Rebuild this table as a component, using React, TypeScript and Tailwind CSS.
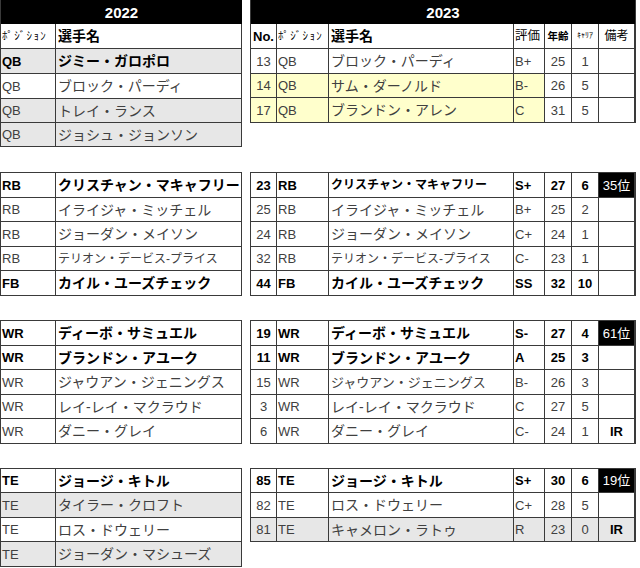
import React from "react";

type CProps = { w: string; bg?: string; cls?: string; children?: React.ReactNode };

function C({ w, bg = "bg-white", cls = "", children }: CProps) {
  return (
    <div
      className={`${w} ${bg} h-full shrink-0 border-r border-b border-[#3a3a3a] flex items-center overflow-hidden whitespace-nowrap ${cls}`}
    >
      {children}
    </div>
  );
}

type LR = { pos: string; name: string; bold?: boolean; gray?: boolean; small?: boolean };

function LRow({ r, h }: { r: LR; h: string }) {
  const base = r.bold ? "font-bold text-black" : "text-[#404040]";
  const bg = r.gray ? "bg-[#e7e7e7]" : "bg-white";
  return (
    <div className={`flex ${h} ${base}`}>
      <C w="w-[55px]" bg={bg} cls="pl-[1px] text-[13px]">
        {r.pos}
      </C>
      <C w="w-[186px]" bg={bg} cls={`pl-[2px] ${r.small ? "text-[12px]" : "text-[14px]"}`}>
        {r.name}
      </C>
    </div>
  );
}

type RR = {
  no: string;
  pos: string;
  name: string;
  ev: string;
  age: string;
  car: string;
  note?: string;
  rank?: boolean;
  bold?: boolean;
  gray?: boolean;
  yellow?: boolean;
  size?: "s12" | "s13";
};

function RRow({ r, h }: { r: RR; h: string }) {
  const base = r.bold ? "font-bold text-black" : "text-[#404040]";
  const bgY = r.yellow ? "bg-[#ffffcc]" : r.gray ? "bg-[#e7e7e7]" : "bg-white";
  const bgRest = r.gray ? "bg-[#e7e7e7]" : "bg-white";
  const nameSize = r.size === "s12" ? "text-[12px]" : r.size === "s13" ? "text-[13px]" : "text-[14px]";
  return (
    <div className={`flex ${h} ${base}`}>
      <C w="w-[26px]" bg={bgY} cls="justify-center text-[13px]">
        {r.no}
      </C>
      <C w="w-[52px]" bg={bgY} cls="pl-[1px] text-[13px]">
        {r.pos}
      </C>
      <C w="w-[185px]" bg={bgY} cls={`pl-[2px] ${nameSize}`}>
        {r.name}
      </C>
      <C w="w-[31px]" bg={bgY} cls="pl-[1px] text-[13px]">
        {r.ev}
      </C>
      <C w="w-[27px]" bg={bgRest} cls="justify-center text-[13px]">
        {r.age}
      </C>
      <C w="w-[27px]" bg={bgRest} cls="justify-center text-[13px]">
        {r.car}
      </C>
      {r.rank ? (
        <C w="w-[36px]" bg="bg-black" cls="justify-center text-[13px] font-normal text-white">
          {r.note}
        </C>
      ) : (
        <C w="w-[36px]" bg={bgRest} cls="justify-center text-[13px] font-bold text-black">
          {r.note}
        </C>
      )}
    </div>
  );
}

const H25 = "h-[25px]";
const H24 = "h-[24px]";

function LeftHeader() {
  return (
    <div className={`flex ${H25}`}>
      <C w="w-[55px]" cls="pl-[1px] text-[11px] tracking-[1.3px] text-black">
        ﾎﾟｼﾞｼｮﾝ
      </C>
      <C w="w-[186px]" cls="pl-[2px] text-[14px] font-bold text-black">
        選手名
      </C>
    </div>
  );
}

function RightHeader() {
  return (
    <div className={`flex ${H25} text-black`}>
      <C w="w-[26px]" cls="pl-[2px] text-[13px] font-bold">
        No.
      </C>
      <C w="w-[52px]" cls="pl-[1px] text-[11px] tracking-[1.3px]">
        ﾎﾟｼﾞｼｮﾝ
      </C>
      <C w="w-[185px]" cls="pl-[2px] text-[14px] font-bold">
        選手名
      </C>
      <C w="w-[31px]" cls="pl-[1px] text-[12.5px]">
        評価
      </C>
      <C w="w-[27px]" cls="justify-center text-[10.5px] font-bold">
        年齢
      </C>
      <C w="w-[27px]" cls="justify-center text-[8px]">
        ｷｬﾘｱ
      </C>
      <C w="w-[36px]" cls="justify-center text-[12px]">
        備考
      </C>
    </div>
  );
}

function Title({ text }: { text: string }) {
  return (
    <div className="h-[24px] bg-black flex items-center justify-center text-white font-bold text-[15px]">
      {text}
    </div>
  );
}

export default function App() {
  return (
    <div className="w-[640px] h-[568px] bg-white overflow-hidden font-['Liberation_Sans','Noto_Sans_CJK_JP',sans-serif] leading-none">
      {/* Block 1 */}
      <div className="flex items-start gap-[8px]">
        <div className="w-[242px] border-l border-[#3a3a3a]">
          <Title text="2022" />
          <LeftHeader />
          <LRow h={H25} r={{ pos: "QB", name: "ジミー・ガロポロ", bold: true, gray: true }} />
          <LRow h={H25} r={{ pos: "QB", name: "ブロック・パーディ" }} />
          <LRow h={H24} r={{ pos: "QB", name: "トレイ・ランス", gray: true }} />
          <LRow h={H24} r={{ pos: "QB", name: "ジョシュ・ジョンソン", gray: true }} />
        </div>
        <div className="w-[386px] border-l border-r border-[#3a3a3a]">
          <Title text="2023" />
          <RightHeader />
          <RRow h={H25} r={{ no: "13", pos: "QB", name: "ブロック・パーディ", ev: "B+", age: "25", car: "1" }} />
          <RRow h={H24} r={{ no: "14", pos: "QB", name: "サム・ダーノルド", ev: "B-", age: "26", car: "5", yellow: true }} />
          <RRow h={H25} r={{ no: "17", pos: "QB", name: "ブランドン・アレン", ev: "C", age: "31", car: "5", yellow: true }} />
        </div>
      </div>

      <div className="h-[25px]" />

      {/* Block 2 */}
      <div className="flex items-start gap-[8px]">
        <div className="w-[242px] border-l border-t border-[#3a3a3a]">
          <LRow h={H25} r={{ pos: "RB", name: "クリスチャン・マキャフリー", bold: true }} />
          <LRow h={H24} r={{ pos: "RB", name: "イライジャ・ミッチェル" }} />
          <LRow h={H25} r={{ pos: "RB", name: "ジョーダン・メイソン" }} />
          <LRow h={H24} r={{ pos: "RB", name: "テリオン・デービス-プライス", small: true }} />
          <LRow h={H25} r={{ pos: "FB", name: "カイル・ユーズチェック", bold: true }} />
        </div>
        <div className="w-[386px] border-l border-t border-r border-[#3a3a3a]">
          <RRow h={H25} r={{ no: "23", pos: "RB", name: "クリスチャン・マキャフリー", ev: "S+", age: "27", car: "6", note: "35位", rank: true, bold: true, size: "s12" }} />
          <RRow h={H24} r={{ no: "25", pos: "RB", name: "イライジャ・ミッチェル", ev: "B+", age: "25", car: "2" }} />
          <RRow h={H25} r={{ no: "24", pos: "RB", name: "ジョーダン・メイソン", ev: "C+", age: "24", car: "1" }} />
          <RRow h={H24} r={{ no: "32", pos: "RB", name: "テリオン・デービス-プライス", ev: "C-", age: "23", car: "1", size: "s12" }} />
          <RRow h={H25} r={{ no: "44", pos: "FB", name: "カイル・ユーズチェック", ev: "SS", age: "32", car: "10", bold: true }} />
        </div>
      </div>

      <div className="h-[24px]" />

      {/* Block 3 */}
      <div className="flex items-start gap-[8px]">
        <div className="w-[242px] border-l border-t border-[#3a3a3a]">
          <LRow h={H25} r={{ pos: "WR", name: "ディーボ・サミュエル", bold: true }} />
          <LRow h={H24} r={{ pos: "WR", name: "ブランドン・アユーク", bold: true }} />
          <LRow h={H25} r={{ pos: "WR", name: "ジャウアン・ジェニングス" }} />
          <LRow h={H24} r={{ pos: "WR", name: "レイ-レイ・マクラウド" }} />
          <LRow h={H25} r={{ pos: "WR", name: "ダニー・グレイ" }} />
        </div>
        <div className="w-[386px] border-l border-t border-r border-[#3a3a3a]">
          <RRow h={H25} r={{ no: "19", pos: "WR", name: "ディーボ・サミュエル", ev: "S-", age: "27", car: "4", note: "61位", rank: true, bold: true }} />
          <RRow h={H24} r={{ no: "11", pos: "WR", name: "ブランドン・アユーク", ev: "A", age: "25", car: "3", bold: true }} />
          <RRow h={H25} r={{ no: "15", pos: "WR", name: "ジャウアン・ジェニングス", ev: "B-", age: "26", car: "3", size: "s13" }} />
          <RRow h={H24} r={{ no: "3", pos: "WR", name: "レイ-レイ・マクラウド", ev: "C", age: "27", car: "5" }} />
          <RRow h={H25} r={{ no: "6", pos: "WR", name: "ダニー・グレイ", ev: "C-", age: "24", car: "1", note: "IR" }} />
        </div>
      </div>

      <div className="h-[24px]" />

      {/* Block 4 */}
      <div className="flex items-start gap-[8px]">
        <div className="w-[242px] border-l border-t border-[#3a3a3a]">
          <LRow h={H24} r={{ pos: "TE", name: "ジョージ・キトル", bold: true }} />
          <LRow h={H25} r={{ pos: "TE", name: "タイラー・クロフト", gray: true }} />
          <LRow h={H24} r={{ pos: "TE", name: "ロス・ドウェリー" }} />
          <LRow h={H25} r={{ pos: "TE", name: "ジョーダン・マシューズ", gray: true }} />
        </div>
        <div className="w-[386px] border-l border-t border-r border-[#3a3a3a]">
          <RRow h={H24} r={{ no: "85", pos: "TE", name: "ジョージ・キトル", ev: "S+", age: "30", car: "6", note: "19位", rank: true, bold: true }} />
          <RRow h={H25} r={{ no: "82", pos: "TE", name: "ロス・ドウェリー", ev: "C+", age: "28", car: "5" }} />
          <RRow h={H24} r={{ no: "81", pos: "TE", name: "キャメロン・ラトゥ", ev: "R", age: "23", car: "0", note: "IR", gray: true }} />
        </div>
      </div>
    </div>
  );
}
